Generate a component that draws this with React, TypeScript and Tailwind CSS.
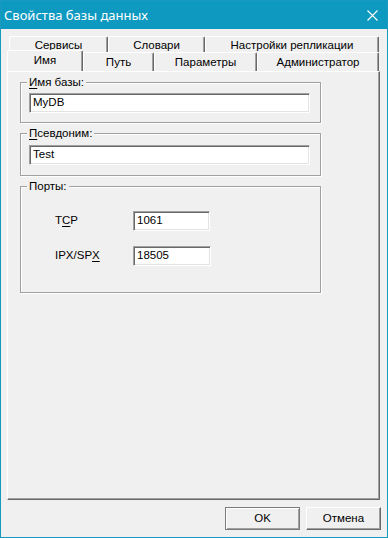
import React from "react";

const font = { fontFamily: '"Liberation Sans", Arial, sans-serif' };

function Tab({ w, children, selected }: { w: string; children: React.ReactNode; selected?: boolean }) {
  return (
    <div
      className={`${w} ${selected ? "h-[21px] -mt-[2px] z-10 bg-[#f0f0f0]" : "h-full"} flex items-center justify-center rounded-t-[2px] border-t border-l border-r border-t-white border-l-white border-r-[#696969] shadow-[inset_-1px_0_0_#a0a0a0] text-[11.5px] text-black shrink-0`}
    >
      <span className={selected ? "-mt-[1px]" : "mt-[2px]"}>{children}</span>
    </div>
  );
}

function Sunken({ w, value }: { w: string; value: string }) {
  return (
    <div
      className={`${w} h-[20px] bg-white border border-t-[#a0a0a0] border-l-[#a0a0a0] border-r-white border-b-white shadow-[inset_1px_1px_0_#696969,inset_-1px_-1px_0_#e3e3e3] flex items-center pl-[3px] text-[11.5px] text-black`}
    >
      {value}
    </div>
  );
}

function Group({ label, className, children }: { label: React.ReactNode; className: string; children?: React.ReactNode }) {
  return (
    <div className={`relative border border-[#a0a0a0] shadow-[inset_1px_1px_0_white,1px_1px_0_white] ${className}`}>
      <span className="absolute -top-[8px] left-[6px] px-[2px] bg-[#f0f0f0] text-[11.5px] leading-[14px] text-black">
        {label}
      </span>
      {children}
    </div>
  );
}

function Btn({ children, def }: { children: React.ReactNode; def?: boolean }) {
  return (
    <div
      className={`w-[75px] h-[23px] flex items-center justify-center text-[11.5px] text-black bg-[#f0f0f0] ${
        def
          ? "border border-[#7a7a7a] shadow-[inset_1px_1px_0_white,inset_-1px_-1px_0_#a0a0a0]"
          : "border border-t-white border-l-white border-r-[#696969] border-b-[#696969] shadow-[inset_-1px_-1px_0_#a0a0a0]"
      }`}
    >
      {children}
    </div>
  );
}

export default function App() {
  return (
    <div style={font} className="w-[388px] h-[538px] bg-[#f0f0f0] border border-[#1899c0] flex flex-col overflow-hidden">
      <div className="h-[28px] bg-[#0e99c0] flex items-center justify-between pl-[3px] pr-[8px] shrink-0">
        <span className="text-white leading-none" style={{ fontFamily: '"Noto Sans", "Liberation Sans", sans-serif', fontSize: "13px" }}>
          Свойства базы данных
        </span>
        <svg width="11" height="11" viewBox="0 0 11 11" className="mr-[1px]">
          <path d="M0.5 0.5 L10.5 10.5 M10.5 0.5 L0.5 10.5" stroke="white" strokeWidth="1.1" />
        </svg>
      </div>

      <div className="flex flex-col pl-[6px] pt-[7px]">
        <div className="flex h-[16px] ml-[2px]">
          <Tab w="w-[99px]">Сервисы</Tab>
          <Tab w="w-[97px]">Словари</Tab>
          <Tab w="w-[174px]">Настройки репликации</Tab>
        </div>
        <div className="flex h-[19px]">
          <Tab w="w-[76px]" selected>
            Имя
          </Tab>
          <Tab w="w-[71px]">Путь</Tab>
          <Tab w="w-[103px]">Параметры</Tab>
          <Tab w="w-[122px]">Администратор</Tab>
        </div>
        <div className="w-[373px] h-[429px] border border-t-white border-l-white border-r-[#696969] border-b-[#696969] shadow-[inset_-1px_-1px_0_#a0a0a0] flex flex-col pl-[12px] pt-[10px] gap-[10px]">
          <Group label={<><u className="underline-offset-2">И</u>мя базы:</>} className="w-[301px] h-[41px] pl-[8px] pt-[10px]">
            <Sunken w="w-[281px]" value="MyDB" />
          </Group>
          <Group label={<><u className="underline-offset-2">П</u>севдоним:</>} className="w-[301px] h-[43px] pl-[8px] pt-[11px]">
            <Sunken w="w-[281px]" value="Test" />
          </Group>
          <Group label="Порты:" className="w-[301px] h-[107px] pl-[34px] pt-[24px]">
            <div className="flex flex-col gap-[15px]">
              <div className="flex items-center">
                <span className="w-[78px] text-[11.5px] text-black">
                  T<u className="underline-offset-2">C</u>P
                </span>
                <Sunken w="w-[77px]" value="1061" />
              </div>
              <div className="flex items-center">
                <span className="w-[78px] text-[11.5px] text-black">
                  IPX/SP<u className="underline-offset-2">X</u>
                </span>
                <Sunken w="w-[78px]" value="18505" />
              </div>
            </div>
          </Group>
        </div>
        <div className="flex justify-end gap-[6px] mt-[7px] pr-[6px]">
          <Btn def>OK</Btn>
          <Btn>Отмена</Btn>
        </div>
      </div>
    </div>
  );
}
